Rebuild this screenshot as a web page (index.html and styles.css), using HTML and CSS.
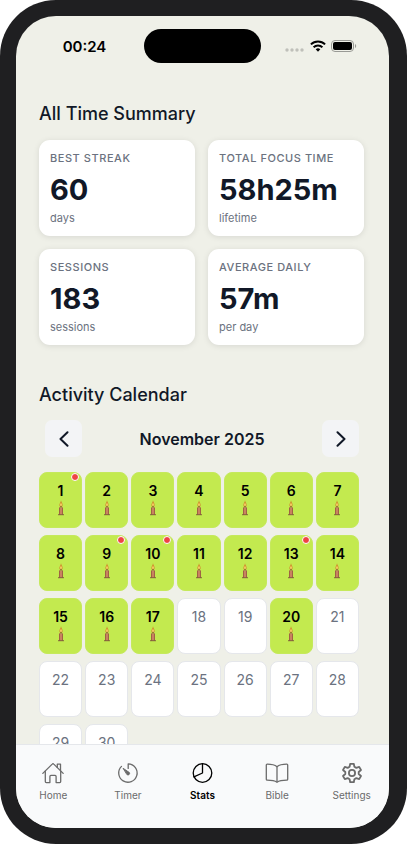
FILE: index.html
```html
<!DOCTYPE html>
<html lang="en">
<head>
    <meta charset="UTF-8">
    <meta name="viewport" content="width=device-width, initial-scale=1">
    <title>Stats</title>
    <link rel="stylesheet" href="styles.css">
</head>
<body>
    <svg class="sprite" aria-hidden="true">
        <symbol id="candle" viewBox="0 0 8 16">
            <path d="M2.2 7.4h3.6V15H2.2z" fill="#c98260"/>
            <path d="M2 7.6h.8V15H2zM5.2 7.6h.8V15h-.8z" fill="#96563e"/>
            <path d="M1 14.2h6v1H1z" fill="#83633a"/>
            <path d="M4 .2C4.3 2 5.9 3.3 5.6 5.5 5.4 7.2 2.6 7.2 2.4 5.5 2.1 3.6 3.7 2.5 4 .2z" fill="#d08a2b"/>
            <path d="M4 2.6c.2 1 1 1.6.8 2.8-.2 1-1.4 1-1.6 0-.1-1.2.6-1.8.8-2.8z" fill="#ffdf72"/>
            <path d="M4 5.8v1.8" stroke="#573626" stroke-width=".8"/>
        </symbol>
    </svg>

    <div class="phone">
        <div class="screen">
            <header class="status-bar">
                <span class="time">00:24</span>
                <div class="island"></div>
                <div class="status-icons">
                    <svg width="20" height="4" viewBox="0 0 20 4" fill="#bfc0ba">
                        <circle cx="2" cy="2" r="1.7"/><circle cx="7" cy="2" r="1.7"/><circle cx="12" cy="2" r="1.7"/><circle cx="17" cy="2" r="1.7"/>
                    </svg>
                    <svg class="wifi" width="16" height="12" viewBox="0 0 16 12" fill="none" stroke="#000" stroke-width="2">
                        <path d="M.9 4.4a10.2 10.2 0 0 1 14.2 0"/>
                        <path d="M3.6 7.2a6.3 6.3 0 0 1 8.8 0"/>
                        <path d="M8 11.7 5.7 9.3a3.3 3.3 0 0 1 4.6 0z" fill="#000" stroke="none"/>
                    </svg>
                    <svg width="26" height="12" viewBox="0 0 26 12">
                        <rect x=".5" y=".5" width="22" height="11" rx="3.5" fill="none" stroke="#999a95"/>
                        <rect x="2" y="2" width="19" height="8" rx="2" fill="#000"/>
                        <path d="M24 4v4c1.6-.6 1.6-3.4 0-4z" fill="#999a95"/>
                    </svg>
                </div>
            </header>

            <main class="content">
                <section class="summary">
                    <h2>All Time Summary</h2>
                    <div class="cards">
                        <div class="card">
                            <h3>Best Streak</h3>
                            <p class="value">60</p>
                            <p class="unit">days</p>
                        </div>
                        <div class="card">
                            <h3>Total Focus Time</h3>
                            <p class="value">58h25m</p>
                            <p class="unit">lifetime</p>
                        </div>
                        <div class="card">
                            <h3>Sessions</h3>
                            <p class="value">183</p>
                            <p class="unit">sessions</p>
                        </div>
                        <div class="card">
                            <h3>Average Daily</h3>
                            <p class="value">57m</p>
                            <p class="unit">per day</p>
                        </div>
                    </div>
                </section>

                <section class="calendar">
                    <h2>Activity Calendar</h2>
                    <div class="month-nav">
                        <button type="button" aria-label="Previous month">
                            <svg width="10" height="16" viewBox="0 0 10 16"><path d="M8.5 1.2 1.5 8l7 6.8"/></svg>
                        </button>
                        <span class="month">November 2025</span>
                        <button type="button" aria-label="Next month">
                            <svg width="10" height="16" viewBox="0 0 10 16"><path d="M1.5 1.2 8.5 8l-7 6.8"/></svg>
                        </button>
                    </div>
                    <ol class="days" id="days"></ol>
                </section>
            </main>

            <nav class="tab-bar">
                <a href="#home">
                    <svg width="24" height="24" viewBox="0 0 24 24">
                        <path d="M1.8 12.4 11.2 3.1a1.1 1.1 0 0 1 1.6 0l9.4 9.3"/>
                        <path d="M4.3 10.2v10.4c0 .6.4 1 1 1h3.6v-6.2c0-.6.4-1 1-1h4.2c.6 0 1 .4 1 1v6.2h3.6c.6 0 1-.4 1-1V10.2"/>
                        <path d="M16.3 6.4V3.1h3.2v6.5"/>
                    </svg>
                    Home
                </a>
                <a href="#timer">
                    <svg width="24" height="24" viewBox="0 0 24 24">
                        <path d="M5.5 5.4a9.2 9.2 0 1 0 6.7-2.6v4.6"/>
                        <path d="M7.4 7.5l6 4.1a1.6 1.6 0 0 1-2.1 2.2z" fill="currentColor" stroke-width="1"/>
                    </svg>
                    Timer
                </a>
                <a href="#stats" class="active" aria-current="page">
                    <svg width="24" height="24" viewBox="0 0 24 24">
                        <circle cx="12.5" cy="12" r="9.3"/>
                        <path d="M12.5 2.7V12l-8.6 3.8"/>
                    </svg>
                    Stats
                </a>
                <a href="#bible">
                    <svg width="24" height="24" viewBox="0 0 24 24">
                        <path d="M12 5.7C9.9 3.9 6.3 3.1 2.2 3.1a.9.9 0 0 0-.9.9v14.2c0 .5.4.9.9.9 4 0 7.4.4 9.8 2.1 2.4-1.7 5.8-2.1 9.8-2.1.5 0 .9-.4.9-.9V4a.9.9 0 0 0-.9-.9C17.7 3.1 14.1 3.9 12 5.7z"/>
                        <path d="M12 5.7v15"/>
                    </svg>
                    Bible
                </a>
                <a href="#settings">
                    <svg class="gear" width="24" height="24" viewBox="0 0 24 24">
                        <path d="M10.2 2.8h3.6l.6 3 1.9 1.1 2.9-1 1.8 3.1-2.3 2v2l2.3 2-1.8 3.1-2.9-1-1.9 1.1-.6 3h-3.6l-.6-3-1.9-1.1-2.9 1L3 15l2.3-2v-2L3 9l1.8-3.1 2.9 1 1.9-1.1z"/>
                        <circle cx="12" cy="12" r="3.1"/>
                    </svg>
                    Settings
                </a>
            </nav>
        </div>
    </div>

    <script>
        const daysInMonth = 30;
        const focused = [1, 2, 3, 4, 5, 6, 7, 8, 9, 10, 11, 12, 13, 14, 15, 16, 17, 20];
        const noted = [1, 9, 10, 13];

        let html = '';
        for (let day = 1; day <= daysInMonth; day++) {
            const done = focused.includes(day);
            html += `
                <li class="day ${done ? 'done' : ''}">
                    <span>${day}</span>
                    ${done ? '<svg width="8" height="16"><use href="#candle"/></svg>' : ''}
                    ${noted.includes(day) ? '<i class="dot"></i>' : ''}
                </li>`;
        }
        document.getElementById('days').innerHTML = html;
    </script>
</body>
</html>
```

FILE: styles.css
```css
* {
    box-sizing: border-box;
}

body {
    margin: 0;
    background: #fff;
    color: #111827;
    font-family: Inter, "Liberation Sans", sans-serif;
}

h2, h3, p, ol {
    margin: 0;
    padding: 0;
}

.sprite {
    display: none;
}

.phone {
    height: 100vh;
    padding: 16px 18px 16px 16px;
    background: #1f1f21;
    border-radius: 56px;
}

.screen {
    height: 100%;
    display: flex;
    flex-direction: column;
    overflow: hidden;
    background: #eff0e8;
    border-radius: 40px;
}

/* Status bar */
.status-bar {
    flex: none;
    display: grid;
    grid-template-columns: 1fr 117px 1fr;
    align-items: center;
    padding-top: 13px;
}

.time {
    padding-left: 9px;
    text-align: center;
    font-size: 15px;
    font-weight: 600;
    color: #000;
}

.island {
    height: 34px;
    border-radius: 17px;
    background: #000;
}

.status-icons {
    display: flex;
    align-items: center;
    justify-content: center;
    gap: 5px;
    padding-right: 9px;
}

.status-icons svg:first-child {
    margin-top: 8px;
}

/* Scrolling content */
.content {
    flex: 1;
    min-height: 0;
    overflow-y: auto;
    scrollbar-width: none;
    padding: 39px 25px 0 23px;
}

h2 {
    font-size: 18px;
    font-weight: 500;
    line-height: 24px;
}

.cards {
    display: grid;
    grid-template-columns: 1fr 1fr;
    gap: 13px;
    margin-top: 14px;
}

.card {
    padding: 11px;
    background: #fff;
    border-radius: 11px;
    box-shadow: 0 1px 6px rgba(0, 0, 0, 0.1);
}

.card h3 {
    font-size: 11px;
    font-weight: 500;
    line-height: 14px;
    letter-spacing: 0.05em;
    text-transform: uppercase;
    white-space: nowrap;
    color: #6b7280;
}

.value {
    margin: 9px 0 5px;
    font-size: 29px;
    font-weight: 700;
    line-height: 32px;
}

.unit {
    font-size: 11px;
    line-height: 14px;
    color: #6b7280;
}

/* Calendar */
.calendar {
    margin-top: 38px;
}

.month-nav {
    display: flex;
    align-items: center;
    justify-content: space-between;
    margin: 13px 5px 15px 6px;
}

.month-nav button {
    display: flex;
    align-items: center;
    justify-content: center;
    width: 37px;
    height: 37px;
    padding: 0;
    border: none;
    border-radius: 7px;
    background: #f3f4f6;
    cursor: pointer;
}

.month-nav path {
    fill: none;
    stroke: #111827;
    stroke-width: 2;
    stroke-linecap: round;
    stroke-linejoin: round;
}

.month {
    font-size: 16px;
    font-weight: 600;
}

.days {
    display: grid;
    grid-template-columns: repeat(7, 1fr);
    gap: 7px 3px;
    margin-right: 5px;
    list-style: none;
}

.day {
    position: relative;
    display: flex;
    flex-direction: column;
    align-items: center;
    height: 56px;
    padding-top: 9px;
    border: 1px solid #e5e7eb;
    border-radius: 8px;
    background: #fff;
    font-size: 14px;
    line-height: 18px;
    color: #6b7280;
}

.day.done {
    border-color: #c5e95c;
    background: #c3ea4f;
    font-weight: 600;
    color: #000;
}

.dot {
    position: absolute;
    top: 0;
    right: 2px;
    width: 8px;
    height: 8px;
    border: 1px solid #fff;
    border-radius: 50%;
    background: #ef4444;
}

/* Bottom tabs */
.tab-bar {
    flex: none;
    display: grid;
    grid-template-columns: repeat(5, 1fr);
    height: 84px;
    padding-top: 16px;
    border-top: 1px solid #e5e7eb;
    background: #f9fafb;
}

.tab-bar a {
    display: flex;
    flex-direction: column;
    align-items: center;
    gap: 3px;
    font-size: 10px;
    line-height: 14px;
    color: #6b6b6b;
    text-decoration: none;
}

.tab-bar svg {
    fill: none;
    stroke: currentColor;
    stroke-width: 1.3;
    stroke-linejoin: round;
    stroke-linecap: round;
}

.tab-bar .gear {
    stroke-width: 1.8;
}

.tab-bar .active {
    font-weight: 600;
    color: #000;
}
```
